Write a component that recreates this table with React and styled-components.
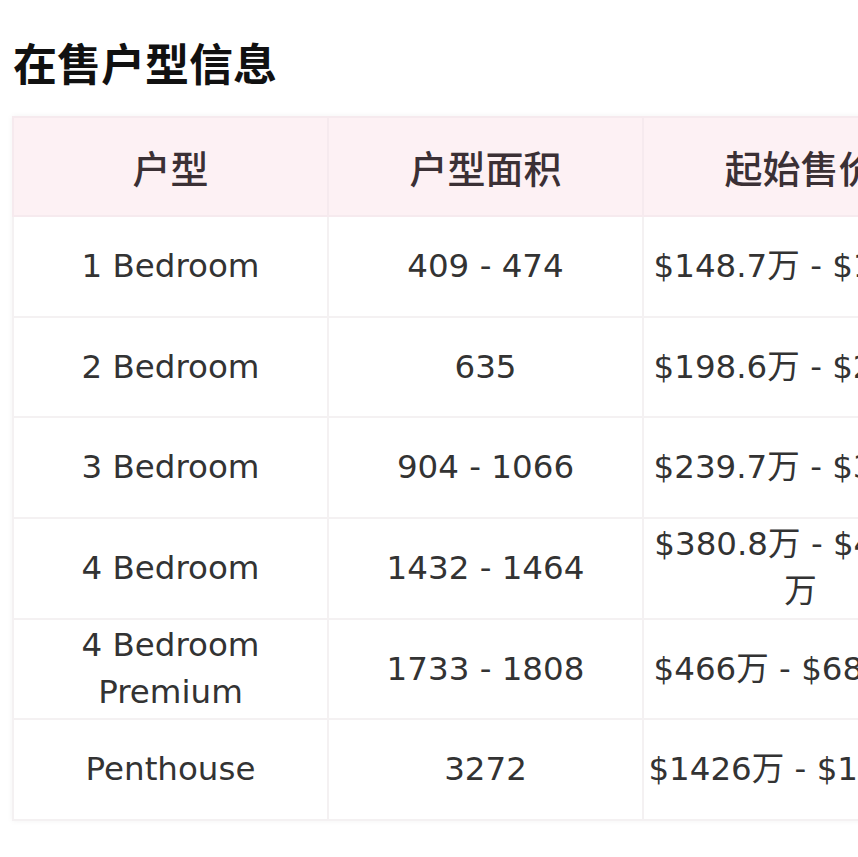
import React from "react";
import styled, { createGlobalStyle } from "styled-components";

const Global = createGlobalStyle`
  html, body { margin: 0; padding: 0; background: #ffffff; }
  body { overflow: hidden; font-family: "DejaVu Sans", "Noto Sans CJK SC", sans-serif; }
`;

const Page = styled.div`
  width: 858px;
  height: 857px;
  overflow: hidden;
  padding: 36px 0 0 12px;
  box-sizing: border-box;
`;

const Title = styled.h2`
  margin: 0 0 28px 1px;
  font-family: "Noto Sans CJK SC", sans-serif;
  font-size: 44px;
  line-height: 52px;
  font-weight: 700;
  color: #111111;
`;

const Table = styled.table`
  border-collapse: collapse;
  table-layout: fixed;
  width: 945px;
  box-shadow: 0 0 6px rgba(0, 0, 0, 0.05);
`;

const HeadCell = styled.th`
  width: 315px;
  height: 99px;
  box-sizing: border-box;
  padding: 0;
  background: #fdf1f4;
  border: 2px solid #f6eaee;
  font-family: "Noto Sans CJK SC", sans-serif;
  font-size: 38px;
  font-weight: 500;
  color: #3b3035;
  text-align: center;
  vertical-align: middle;
`;

const Cell = styled.td`
  height: 100.7px;
  box-sizing: border-box;
  padding: 0 2px;
  background: #ffffff;
  border: 2px solid #f4f1f2;
  font-family: "DejaVu Sans", "Noto Sans CJK SC", sans-serif;
  font-size: 32.5px;
  line-height: 47px;
  color: #333333;
  text-align: center;
  vertical-align: middle;
`;

const rows = [
  ["1 Bedroom", "409 - 474", "$148.7万 - $169万"],
  ["2 Bedroom", "635", "$198.6万 - $209万"],
  ["3 Bedroom", "904 - 1066", "$239.7万 - $321万"],
  ["4 Bedroom", "1432 - 1464", "$380.8万 - $432.6万"],
  ["4 Bedroom Premium", "1733 - 1808", "$466万 - $688.8万"],
  ["Penthouse", "3272", "$1426万 - $1458万"],
];

export default function App() {
  return (
    <>
      <Global />
      <Page>
        <Title>在售户型信息</Title>
        <Table>
          <thead>
            <tr>
              <HeadCell>户型</HeadCell>
              <HeadCell>户型面积</HeadCell>
              <HeadCell>起始售价</HeadCell>
            </tr>
          </thead>
          <tbody>
            {rows.map((r) => (
              <tr key={r[0]}>
                {r.map((c, i) => (
                  <Cell key={i}>{c}</Cell>
                ))}
              </tr>
            ))}
          </tbody>
        </Table>
      </Page>
    </>
  );
}
